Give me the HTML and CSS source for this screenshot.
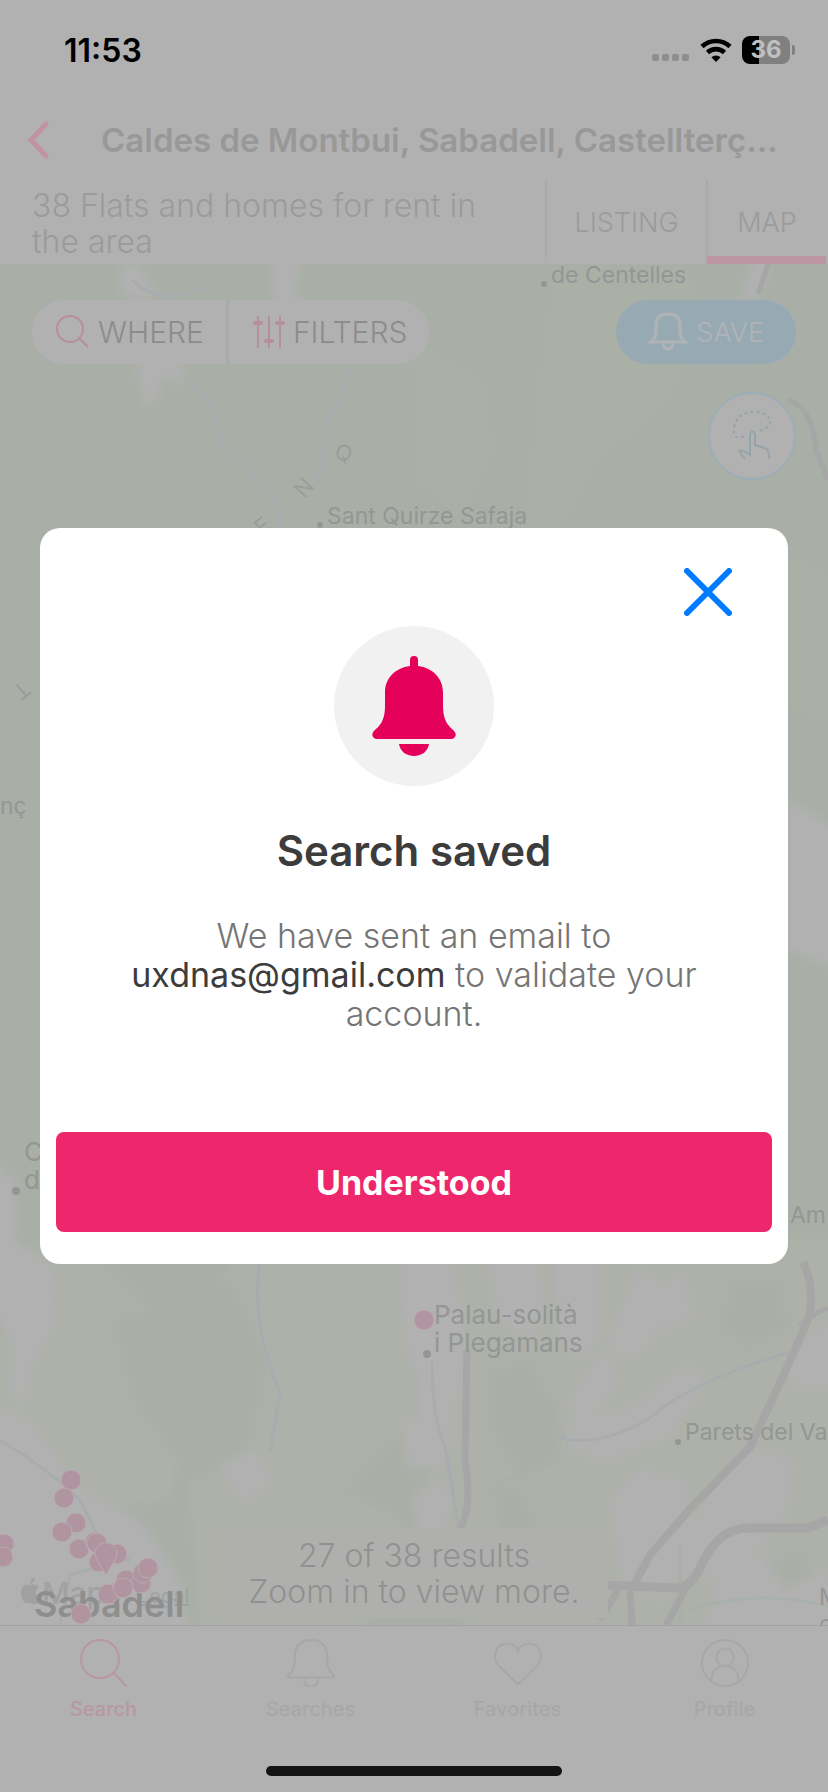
FILE: index.html
```html
<!DOCTYPE html>
<html lang="en">
<head>
    <meta charset="UTF-8">
    <meta name="viewport" content="width=device-width, initial-scale=1.0">
    <title>Search saved</title>
    <link rel="stylesheet" href="styles.css">
</head>
<body>
    <div class="screen">
        <div class="status-bar">
            <span class="time">11:53</span>
            <div class="status-icons">
                <svg class="signal" viewBox="0 0 38 8" width="38" height="8">
                    <rect x="0" y="0" width="7" height="7" rx="2"/>
                    <rect x="10" y="0" width="7" height="7" rx="2"/>
                    <rect x="20" y="0" width="7" height="7" rx="2"/>
                    <rect x="30" y="0" width="7" height="7" rx="2"/>
                </svg>
                <svg class="wifi" viewBox="0 0 32 24" width="32" height="24">
                    <path d="M2 8.500A20.500 20.500 0 0 1 30 8.500" fill="none" stroke="#000" stroke-width="4.600"/>
                    <path d="M7.500 14.500A12.500 12.500 0 0 1 24.500 14.500" fill="none" stroke="#000" stroke-width="4.600"/>
                    <path d="M16 24L11.400 19.300A6.600 6.600 0 0 1 20.600 19.300Z"/>
                </svg>
                <div class="battery"><span>36</span></div>
            </div>
        </div>

        <header class="header">
            <button class="back" aria-label="Back">
                <svg viewBox="0 0 22 38" width="22" height="38"><path d="M19 3L4 19L19 35"/></svg>
            </button>
            <h1>Caldes de Montbui, Sabadell, Castellterç...</h1>
        </header>

        <div class="summary">
            <p>38 Flats and homes for rent in the area</p>
            <a href="#listing" class="view listing">LISTING</a>
            <a href="#map" class="view active">MAP</a>
        </div>

        <main class="map">
            <svg class="map-canvas" viewBox="0 264 828 1361" preserveAspectRatio="xMidYMid slice">
                <defs>
                    <filter id="soft"><feGaussianBlur stdDeviation="4"/></filter>
                </defs>
                <rect x="0" y="264" width="828" height="1361" fill="#a9afa6"/>
                <g filter="url(#soft)">
                <!-- lighter woodland -->
                <g fill="#abb0a7">
                    <path d="M560 264h120l20 60-40 80-70 60-30 60h-30l10-120z"/>
                    <path d="M420 350l60 30 10 70-30 60-40-30z"/>
                    <path d="M788 560l40 20v140l-40-20z"/>
                </g>
                <g fill="#adb1a9">
                    <path d="M0 1250l90 0 60 60 40 90-20 100-90 10-80-40z"/>
                    <path d="M230 1262l180 0 0 160-60 60-20 60-70 40-60-60 30-110-40-60z"/>
                    <path d="M420 1240h420v400H470l-40-120z"/>
                    <path d="M190 1480l90-20 120 60-40 120H200z"/>
                </g>
                <!-- built-up land -->
                <g fill="#b1b1b1">
                    <path d="M120 264h18l18 30-12 8-22-8z"/>
                    <path d="M274 260h26l-4 34 8 12h-26l-8-16z"/>
                    <path d="M136 358h46v26l-18-8-10 26-10 2z"/>
                    <path d="M740 300l12-40h18l-8 32-8 10z"/>
                    <path d="M788 800l50 30v140l-50-20z"/>
                    <path d="M-10 1160l24 20 0 60 38 26 2 60-22 40-6 40-16-10 4-50-24-40z"/>
                    <path d="M400 1240h44l20 80-2 60-12 60-6 30-28-6 2-70-14-60z"/>
                    <path d="M486 1240h48l10 72-12 30-34-20z"/>
                    <path d="M555 1240h46l0 92-20 30-26-30z"/>
                    <path d="M616 1320l22-54 28 22-4 42-24 16z"/>
                    <path d="M660 1285l26-12 6 46-26 12z"/>
                    <path d="M610 1330l24-16 20 24-20 22-24-8z"/>
                    <path d="M570 1400l34-54 14 34-20 34-22 12z"/>
                    <path d="M566 1425l70-20 50-40 24 10-42 64-60 22-42-10z"/>
                    <path d="M784 1350l54-36v76l-44 0z"/>
                    <path d="M148 1336l14 0 6 42-12 18z"/>
                    <path d="M182 1370l18-16 14 44 10 22-18 18-50-6z"/>
                    <path d="M220 1470l30-24 24 34-30 24z"/>
                    <path d="M610 1500l30-32 46 12 8 62-28 62-42-14-8-42z"/>
                    <path d="M706 1490l44-42 44 10-10 62-54 62-44-10z"/>
                    <path d="M646 1584l36-68 30 12-32 54z"/>
                    <path d="M720 1570l60-20 58 30v60H700z"/>
                    <path d="M-10 1400l40 20 50 70 60 30 40 60 10 60H-10z"/>
                    <path d="M411 1500l24-24 18 24-8 34-24 10z"/>
                    <path d="M402 1416l44 12v40h-40z"/>
                </g>
                <g fill="#a9afa7">
                    <path d="M110 1320l120-40 40 80-20 90-60 30-60-80z"/>
                    <path d="M490 1370l40-10 30 50 0 50-40 20-30-50z"/>
                    <path d="M730 1280l50 0 10 50-40 20-30-20z"/>
                    <path d="M765 1560l40-10 10 24-30 16z"/>
                    <path d="M490 1480l30 10 20 40-40 14z"/>
                </g>
                </g>
                <g fill="none" stroke="#a9acae" stroke-width="3">
                    <path d="M132 280q30 30 80 4M186 378l26 26 10 40 28 26 30 40v20M350 360l-10 40-12 20-10 60"/>
                    <path d="M260 1262q-10 60 20 130l-10 60"/>
                    <path d="M560 1438q40 10 90-20 40-36 140-66"/>
                    <path d="M432 1360q0 60 14 90l12 74M0 1440q50 30 80 60l30 60M60 1625l10-50 60-16"/>
                </g>
                <path d="M500 1480q90-20 60-50M690 1610q68-22 138-4M680 1625l0-80" fill="none" stroke="#a9b0aa" stroke-width="3"/>
                <!-- main roads -->
                <g fill="none" stroke="#a6a6a7" stroke-linejoin="round">
                    <path d="M467 1350l-2 110q8 50-6 70" stroke-width="7"/>
                    <path d="M803 1262q14 30 4 60l-22 50-35 75-60 62-40 46-16 30" stroke-width="8"/>
                    <path d="M800 1326q10-12 28-18" stroke-width="5"/>
                    <path d="M598 1585l80 3q14-2 22-20 18-40 48-40h60l20-8" stroke-width="9"/>
                    <path d="M690 1580l-24 45M630 1588l2 37M618 1590l-18 30" stroke-width="7"/>
                    <path d="M768 264l-10 30M788 400q24 6 28 50l12 30" stroke-width="5"/>
                </g>
                <g class="places">
                    <circle cx="544" cy="284" r="3"/>
                    <text x="551" y="283">de Centelles</text>
                    <circle cx="320" cy="525" r="3"/>
                    <text x="327" y="524">Sant Quirze Safaja</text>
                    <text x="0" y="814">nç</text>
                    <circle cx="16" cy="1191" r="4"/>
                    <text x="24" y="1161" class="town">C</text>
                    <text x="24" y="1189" class="town">d</text>
                    <text x="790" y="1223">Am</text>
                    <circle cx="427" cy="1354" r="4"/>
                    <text x="434" y="1324" class="town">Palau-solità</text>
                    <text x="434" y="1352" class="town">i Plegamans</text>
                    <circle cx="678" cy="1442" r="3"/>
                    <text x="685" y="1440">Parets del Vallès</text>
                    <text x="819" y="1605">M</text>
                    <text x="819" y="1632">c</text>
                </g>
                <g class="region">
                    <text transform="translate(333 457) rotate(22)">Q</text>
                    <text transform="translate(304 499) rotate(-48)">N</text>
                    <text transform="translate(262 536) rotate(-38)">E</text>
                    <text transform="translate(22 680) rotate(140)">T</text>
                </g>
                <g fill="#a0a1a0">
                    <path d="M29 1585c4-2 9 0 10 2-5 3-4 10 1 12-2 6-6 6-10 4-4 1-8 0-9-10 0-6 4-10 8-8zM30 1584c0-4 2-6 5-7 0 4-2 6-5 7z"/>
                    <text x="42" y="1604" class="maps">Maps</text>
                    <text x="138" y="1603" class="legal">Legal</text>
                </g>
                <text x="34" y="1617" class="city">Sabadell</text>
                <!-- property pins -->
                <g class="pins">
                    <circle cx="424" cy="1320" r="10"/>
                    <circle cx="71" cy="1480" r="10"/><circle cx="64" cy="1498" r="10"/>
                    <circle cx="76" cy="1523" r="10"/><circle cx="62" cy="1532" r="10"/>
                    <circle cx="4" cy="1544" r="10"/><circle cx="3" cy="1557" r="10"/>
                    <circle cx="79" cy="1549" r="10"/><circle cx="95" cy="1542" r="10"/><circle cx="97" cy="1543" r="10"/>
                    <circle cx="117" cy="1554" r="10"/><circle cx="99" cy="1562" r="10"/>
                    <path d="M106 1575l-9-15a11 11 0 1 1 18 0z"/>
                    <circle cx="126" cy="1580" r="10"/><circle cx="141" cy="1583" r="10"/><circle cx="143" cy="1573" r="10"/>
                    <circle cx="148" cy="1568" r="10"/><circle cx="108" cy="1594" r="10"/>
                    <circle cx="123" cy="1588" r="10"/><circle cx="81" cy="1614" r="10"/>
                </g>
            </svg>

            <div class="map-tools">
                <div class="pill">
                    <button>
                        <svg viewBox="0 0 34 34" width="34" height="34" stroke="#b78f9a" stroke-width="2"><circle cx="14" cy="14" r="13"/><path d="M23 23L32 32"/></svg>
                        WHERE
                    </button>
                    <button>
                        <svg viewBox="0 0 32 34" width="32" height="34" stroke="#b78f9a" stroke-width="2"><path d="M5 1v32M16 1v32M27 1v32"/><path d="M2 8h6M13 26h6M24 8h6" stroke-width="4" stroke-linecap="round"/></svg>
                        FILTERS
                    </button>
                </div>
                <button class="save">
                    <svg viewBox="0 0 40 40" width="40" height="40" stroke="#b1b4b6" stroke-width="3"><path d="M3 30Q8 26 8 20V12Q8 2 20 2T32 12V20Q32 26 37 30Z"/><path d="M15 31a5 6 0 0 0 10 0"/></svg>
                    SAVE
                </button>
            </div>
            <button class="draw" aria-label="Draw area">
                <svg viewBox="0 0 40 50" width="40" height="50" stroke="#95a3aa" stroke-width="2"><path d="M12 25C5 28 1 26 2 18 3 7 10 1 22 1 33 1 39 6 38 12 37 17 31 19 25 21" stroke-dasharray="3 3"/><path d="M13 48L7 40Q10 38 18 44V23Q20 18 23 23V34L35 38Q37 40 37 48"/></svg>
            </button>
            <p class="results">27 of 38 results<br>Zoom in to view more.</p>
        </main>

        <nav class="tabs">
            <a href="#search" class="current">
                <svg viewBox="0 0 48 48" width="48" height="48"><circle cx="20" cy="20" r="19"/><path d="M33 33L47 48"/></svg>
                Search
            </a>
            <a href="#searches">
                <svg viewBox="0 0 50 50" width="48" height="48"><path d="M1 38Q8 32 8 24V18Q9 1 25 1T42 18V24Q42 32 49 38Q49 40 47 40H3Q1 40 1 38Z"/><path d="M18 40V43a7 7 0 0 0 14 0V40"/></svg>
                Searches
            </a>
            <a href="#favorites">
                <svg viewBox="0 0 50 50" width="48" height="48"><path d="M25 47L5 28C-2 20 1 5 13 5 19 5 23 8 25 12 27 8 31 5 37 5 49 5 52 20 45 28Z"/></svg>
                Favorites
            </a>
            <a href="#profile">
                <svg viewBox="0 0 50 50" width="48" height="48"><circle cx="25" cy="25" r="24"/><circle cx="25" cy="19" r="9"/><path d="M11 44C11 34 16 28 25 28S39 34 39 44"/></svg>
                Profile
            </a>
        </nav>
        <div class="home-indicator"></div>
    </div>

    <div class="overlay">
        <section class="modal" role="dialog" aria-labelledby="modalTitle">
            <button class="close" aria-label="Close">
                <svg viewBox="0 0 48 48" width="48" height="48"><path d="M3 3L45 45M45 3L3 45"/></svg>
            </button>
            <div class="bell">
                <svg viewBox="0 0 84 100" width="84" height="100">
                    <path d="M38 10V4a4 4 0 0 1 8 0V10C61 12 71 22 71 37V50C71 61 74 68 80 73 85 77 85 81 80 83H4C-1 81-1 77 4 73 10 68 13 61 13 50V37C13 22 23 12 38 10Z"/>
                    <path d="M27 88H57C56 95 50 100 42 100S28 95 27 88Z"/>
                </svg>
            </div>
            <h2 id="modalTitle">Search saved</h2>
            <p>We have sent an email to<br><strong>uxdnas@gmail.com</strong> to validate your account.</p>
            <button class="confirm">Understood</button>
        </section>
    </div>
</body>
</html>
```
FILE: styles.css
```css
* {
    box-sizing: border-box;
}

body {
    margin: 0;
    font-family: Inter, "Open Sans", sans-serif;
    background-color: #b1b1b1;
    color: #989898;
}

h1, h2, p {
    margin: 0;
}

button {
    border: none;
    padding: 0;
    background: none;
    color: inherit;
    font-family: inherit;
    cursor: pointer;
}

a {
    color: inherit;
    text-decoration: none;
}

svg {
    display: block;
    flex: none;
}

.screen {
    display: flex;
    flex-direction: column;
    min-height: 100vh;
}

/* status bar */
.status-bar {
    display: flex;
    justify-content: space-between;
    align-items: center;
    height: 100px;
    padding: 0 34px 0 64px;
    color: #000;
}

.time {
    font-size: 32px;
    font-weight: 600;
}

.status-icons {
    display: flex;
    align-items: center;
    gap: 10px;
}

.signal {
    fill: #8e8e8e;
    margin-top: 16px;
}

.battery {
    position: relative;
    width: 48px;
    height: 28px;
    margin-right: 4px;
    border-radius: 8px;
    background: linear-gradient(to right, #000 36%, #808080 36%);
    color: #c0c0c0;
    font-size: 24px;
    font-weight: 700;
    line-height: 28px;
    text-align: center;
}

.battery::after {
    content: "";
    position: absolute;
    top: 9px;
    right: -5px;
    width: 3px;
    height: 10px;
    border-radius: 0 3px 3px 0;
    background: #808080;
}

/* header */
.header {
    display: flex;
    align-items: center;
    height: 80px;
    padding: 0 32px 0 27px;
    gap: 52px;
}

.back path {
    fill: none;
    stroke: #bf94a0;
    stroke-width: 5;
    stroke-linecap: round;
}

.header h1 {
    font-size: 33px;
    font-weight: 600;
    white-space: nowrap;
}

.summary {
    display: flex;
    height: 84px;
    padding-right: 2px;
}

.summary p {
    flex: 1;
    align-self: center;
    padding: 4px 32px 0 32px;
    font-size: 32px;
    font-weight: 300;
    line-height: 36px;
    color: #9b9b9b;
}

.view {
    display: flex;
    justify-content: center;
    align-items: center;
    width: 120px;
    padding-top: 8px;
    border-left: 2px solid #a9a9a9;
    border-bottom: 8px solid transparent;
    font-size: 27px;
    font-weight: 300;
    color: #9b9b9b;
}

.view.listing {
    width: 161px;
}

.view.active {
    border-bottom-color: #bc96a2;
}

/* map */
.map {
    position: relative;
    flex: 1;
    display: flex;
    flex-direction: column;
    padding: 36px 32px 7px;
    overflow: hidden;
}

.map-canvas {
    position: absolute;
    top: 0;
    left: 0;
    width: 100%;
    height: 100%;
}

.places {
    fill: #949695;
    font-size: 23px;
}

.town {
    font-size: 26px;
}

.region {
    fill: #9a9d9b;
    font-size: 22px;
}

.maps {
    font-size: 30px;
    font-weight: 500;
}

.legal {
    font-size: 20px;
    text-decoration: underline;
}

.city {
    fill: #8e8e8e;
    font-size: 36px;
    font-weight: 600;
}

.pins {
    fill: #b095a0;
    stroke: #b9abb0;
    stroke-width: 1;
}

.map-tools {
    position: relative;
    display: flex;
    justify-content: space-between;
}

.pill {
    display: flex;
    height: 64px;
    border-radius: 32px;
    background-color: #b1b1b1;
}

.pill button, .save {
    display: flex;
    align-items: center;
    gap: 8px;
    padding: 0 22px 0 24px;
    font-size: 30px;
    font-weight: 300;
    color: #8c8c8c;
}

.pill button + button {
    border-left: 3px solid #a9aba9;
}

.map-tools svg, .draw svg {
    fill: none;
}

.save {
    height: 64px;
    padding: 0 32px;
    border-radius: 32px;
    background-color: #97a9b2;
    color: #b1b4b6;
    font-size: 27px;
}

.draw {
    position: relative;
    display: flex;
    justify-content: center;
    align-items: center;
    align-self: flex-end;
    width: 88px;
    height: 88px;
    margin-top: 28px;
    border: 2px solid #9badb6;
    border-radius: 50%;
    background-color: #b1b1b1;
}

.results {
    position: relative;
    align-self: center;
    margin-top: auto;
    padding: 10px 28px 8px;
    background-color: #afb0ae;
    color: #919191;
    font-size: 32px;
    font-weight: 300;
    line-height: 36px;
    text-align: center;
}

/* bottom tabs */
.tabs {
    display: grid;
    grid-template-columns: repeat(4, 1fr);
    height: 141px;
    padding-top: 13px;
    border-top: 1px solid #a2a2a2;
    color: #a7a7a7;
}

.tabs a {
    display: flex;
    flex-direction: column;
    align-items: center;
    gap: 10px;
    font-size: 20px;
    font-weight: 500;
}

.tabs svg {
    fill: none;
    stroke: currentColor;
    stroke-width: 2;
}

.tabs .current {
    color: #b997a1;
}

.home-indicator {
    align-self: center;
    width: 296px;
    height: 10px;
    margin-bottom: 16px;
    border-radius: 5px;
    background-color: #141414;
}

/* modal */
.overlay {
    position: fixed;
    top: 0;
    right: 0;
    bottom: 0;
    left: 0;
    display: flex;
    justify-content: center;
    align-items: center;
    padding: 0 40px;
}

.modal {
    display: flex;
    flex-direction: column;
    align-items: center;
    width: 100%;
    padding: 40px 16px 32px;
    border-radius: 20px;
    background-color: #fff;
    text-align: center;
}

.close {
    align-self: flex-end;
    margin-right: 40px;
}

.close path {
    stroke: #007aff;
    stroke-width: 6;
    stroke-linecap: round;
}

.bell {
    display: flex;
    justify-content: center;
    align-items: center;
    width: 160px;
    height: 160px;
    margin-top: 10px;
    border-radius: 50%;
    background-color: #f1f1f1;
}

.bell svg {
    fill: #e5005a;
}

.modal h2 {
    margin-top: 40px;
    color: #3c3c3c;
    font-size: 42px;
    font-weight: 600;
    line-height: 50px;
}

.modal p {
    margin-top: 40px;
    padding: 0 64px;
    color: #757575;
    font-size: 34px;
    font-weight: 300;
    line-height: 39px;
}

.modal strong {
    color: #3c3c3c;
    font-weight: 400;
}

.confirm {
    width: 100%;
    height: 100px;
    margin-top: 99px;
    border-radius: 8px;
    background-color: #ee276c;
    color: #fff;
    font-size: 34px;
    font-weight: 700;
}
```
